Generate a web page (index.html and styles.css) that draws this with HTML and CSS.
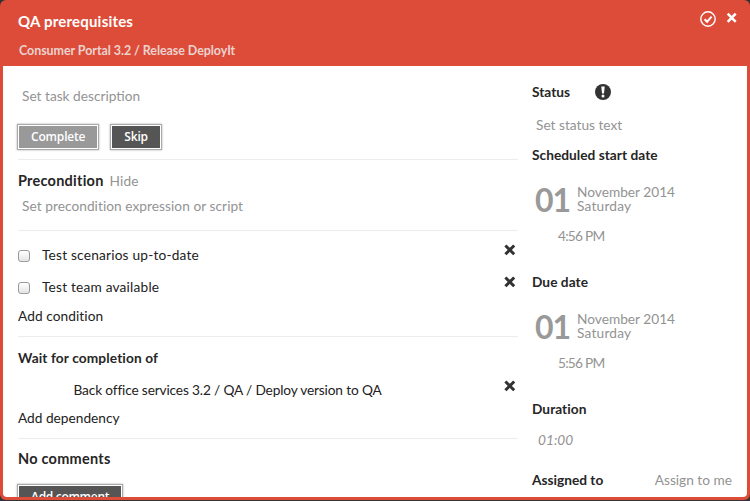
FILE: index.html
```html
<!DOCTYPE html>
<html lang="en">
<head>
<meta charset="utf-8">
<title>QA prerequisites</title>
<link rel="stylesheet" href="styles.css">
</head>
<body>
<svg width="0" height="0" class="defs">
  <symbol id="cross" viewBox="0 0 12 12"><path d="M1.4 1.5l8.8 8.8M10.2 1.5l-8.8 8.8" stroke="currentColor" stroke-width="3" fill="none"/></symbol>
</svg>
<div class="modal">
  <header class="head">
    <div>
      <h1 class="title">QA prerequisites</h1>
      <div class="crumb">Consumer Portal 3.2 / Release DeployIt</div>
    </div>
    <div class="actions">
      <svg class="check" viewBox="0 0 16 16" fill="none" stroke="#fff"><circle cx="8" cy="8" r="7.2" stroke-width="1.4"/><path d="M4.6 8.2l2.5 2.5 4.5-5" stroke-width="2"/></svg>
      <svg class="close" viewBox="0 0 12 12"><path d="M1.7 1.6l8 8.2M9.7 1.6l-8 8.2" stroke="#fff" stroke-width="2.6"/></svg>
    </div>
  </header>
  <div class="body">
    <main class="main">
      <section class="part intro">
        <p class="hint">Set task description</p>
        <div class="buttons"><button class="btn muted">Complete</button><button class="btn">Skip</button></div>
      </section>
      <section class="part precondition">
        <div class="heading"><h2 class="large">Precondition</h2><a class="soft">Hide</a></div>
        <p class="hint script">Set precondition expression or script</p>
      </section>
      <section class="part conditions">
        <div class="row"><i class="box"></i><span class="wide">Test scenarios up-to-date</span><svg class="x"><use href="#cross"/></svg></div>
        <div class="row"><i class="box"></i><span class="wide">Test team available</span><svg class="x"><use href="#cross"/></svg></div>
        <a class="add-condition">Add condition</a>
      </section>
      <section class="part waits">
        <h2 class="wait-title">Wait for completion of</h2>
        <div class="row dependency"><span class="path">Back office services 3.2 / QA / Deploy version to QA</span><svg class="x"><use href="#cross"/></svg></div>
        <a>Add dependency</a>
      </section>
      <section class="comments">
        <h2 class="large">No comments</h2>
        <button class="btn">Add comment</button>
      </section>
    </main>
    <aside class="side">
      <div class="status"><h2>Status</h2><svg class="alert" viewBox="0 0 16 16"><circle cx="8" cy="8" r="8" fill="#333"/><path d="M6.3 2.6h3.4L9 9.6H7z" fill="#fff"/><circle cx="8" cy="12" r="1.5" fill="#fff"/></svg></div>
      <p class="hint status-text">Set status text</p>
      <h2 class="start">Scheduled start date</h2>
      <div class="date"><b class="day">01</b><div><div>November 2014</div><div class="wide">Saturday</div></div></div>
      <div class="time">4:56 PM</div>
      <h2 class="due">Due date</h2>
      <div class="date"><b class="day">01</b><div><div>November 2014</div><div class="wide">Saturday</div></div></div>
      <div class="time">5:56 PM</div>
      <h2 class="duration">Duration</h2>
      <div class="span">01:00</div>
      <div class="assigned"><h2>Assigned to</h2><a class="soft">Assign to me</a></div>
    </aside>
  </div>
</div>
</body>
</html>
```
FILE: styles.css
```css
* { box-sizing: border-box; }
body { margin: 0; height: 501px; overflow: hidden; background: #333; font: 13.7px/16px Lato, "Open Sans", sans-serif; color: #222; }
h1, h2, p { margin: 0; }
h2 { font-size: 13.7px; line-height: 16px; font-weight: 700; color: #262626; }
a { display: block; }
.defs { position: absolute; }
.modal { height: 500px; background: #dd4c39; border-radius: 6px; padding: 0 3px 3px; display: flex; flex-direction: column; }
.head { height: 66px; flex: none; display: flex; justify-content: space-between; padding: 11px 9px 0 15px; color: #fff; }
.title { font-size: 15px; line-height: 20px; letter-spacing: .2px; }
.crumb { margin: 12px 0 0 1px; font-size: 12.5px; line-height: 16px; font-weight: 700; letter-spacing: -.07px; color: #ecd2ce; }
.actions { display: flex; align-items: flex-start; gap: 10px; }
.check { width: 16px; height: 16px; }
.close { width: 12px; height: 12px; margin-top: 1px; }
.body { flex: 1; min-height: 0; overflow: hidden; display: flex; gap: 14px; background: #fff; border-radius: 0 0 4px 4px; padding: 0 14px 0 15px; }
.main { width: 500px; }
.part { border-bottom: 1px solid #ececec; }
.intro { height: 94px; padding-top: 22px; }
.hint, .soft { color: #939393; }
.hint { padding-left: 4px; }
.buttons { display: flex; gap: 11px; margin: 20px 0 0 -1px; }
.btn { height: 26px; padding: 0 13px; border: 1px solid #aaa; box-shadow: inset 0 0 0 1px #fff, 0 0 2px #aaa; background: #555; color: #fff; font: 600 12px/16px "Open Sans", sans-serif; letter-spacing: -.3px; white-space: nowrap; }
.buttons .btn { letter-spacing: -.18px; }
.muted { background: #999; }
.precondition { height: 71px; padding-top: 13px; }
.heading { display: flex; gap: 6px; }
.large { font-size: 14.5px; letter-spacing: .24px; }
.heading .soft { letter-spacing: .1px; }
.script { margin-top: 9px; letter-spacing: .05px; }
.conditions { height: 106px; padding-top: 16px; }
.row { display: flex; height: 32px; align-items: flex-start; }
.wide { letter-spacing: .2px; }
.box { width: 12px; height: 12px; margin: 3px 12px 0 0; border: 1px solid #999; border-radius: 3px; background: linear-gradient(#fff, #e4e4e4); }
.x { width: 12px; height: 12px; margin: -3px 2px 0 auto; color: #333; }
.add-condition { margin-top: -3px; letter-spacing: .07px; }
.waits { height: 102px; padding-top: 13px; }
.wait-title { letter-spacing: .12px; }
.dependency { margin-top: 16px; height: 28px; padding-left: 55.5px; }
.path { letter-spacing: -.15px; }
.dependency .x { margin-top: -2px; }
.comments { padding-top: 12px; }
.comments .btn { display: block; margin: 17px 0 0 -1px; }
.side { width: 201px; padding-top: 18px; }
.status { display: flex; gap: 25px; }
.alert { width: 16px; height: 16px; }
.status-text { margin-top: 17px; }
.start { margin-top: 14px; letter-spacing: .03px; }
.date { display: flex; gap: 7px; margin-top: 22px; height: 28px; padding-left: 3px; line-height: 14px; color: #939393; }
.day { width: 35px; font-size: 32px; line-height: 30px; letter-spacing: -1px; color: #999; }
.time { margin-top: 15px; padding-left: 26px; letter-spacing: -.75px; color: #939393; }
.due, .duration { margin-top: 30px; letter-spacing: .05px; }
.span { margin-top: 15px; padding-left: 6px; font-style: italic; color: #939393; }
.assigned { display: flex; justify-content: space-between; margin-top: 24px; padding-right: 1px; }
```
